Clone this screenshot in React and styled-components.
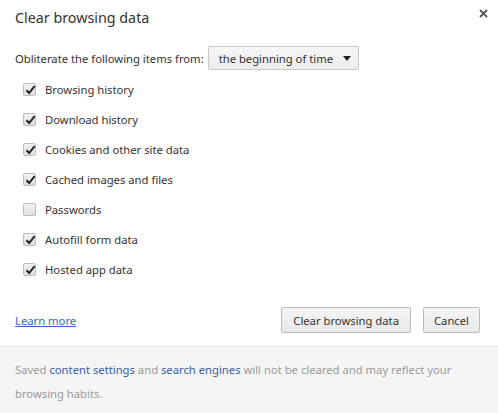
import React from "react";
import styled, { createGlobalStyle } from "styled-components";

const Global = createGlobalStyle`
  html, body { margin: 0; padding: 0; background: #fff; }
  body { font-family: "Noto Sans", "Open Sans", sans-serif; }
`;

const Dialog = styled.div`
  width: 498px;
  height: 413px;
  background: #fff;
  display: flex;
  flex-direction: column;
  position: relative;
  color: #333;
  font-size: 11.25px;
`;

const Header = styled.div`
  padding: 7px 15px 0;
  height: 38px;
  box-sizing: border-box;
`;

const Title = styled.h1`
  margin: 0;
  font-size: 14.3px;
  font-weight: 400;
  line-height: 22px;
  color: #333;
`;

const Close = styled.button`
  position: absolute;
  top: 6px;
  right: 8px;
  width: 14px;
  height: 14px;
  border: 0;
  padding: 0;
  background: none;
  display: flex;
  align-items: center;
  justify-content: center;
`;

const Body = styled.div`
  padding: 0 15px;
  flex: 1;
  display: flex;
  flex-direction: column;
`;

const FromRow = styled.div`
  display: flex;
  align-items: center;
  gap: 4px;
  height: 24px;
  margin-top: 8px;
`;

const Select = styled.div`
  display: flex;
  align-items: center;
  justify-content: space-between;
  width: 151px;
  height: 24px;
  box-sizing: border-box;
  padding: 0 7px 0 10px;
  border: 1px solid #c8c8c8;
  border-radius: 2px;
  background: linear-gradient(#f6f6f6, #ececec);
  color: #333;
`;

const Arrow = styled.span`
  width: 0;
  height: 0;
  border-left: 4.5px solid transparent;
  border-right: 4.5px solid transparent;
  border-top: 5px solid #222;
`;

const List = styled.div`
  display: flex;
  flex-direction: column;
  margin-top: 4px;
`;

const Row = styled.label`
  display: flex;
  align-items: center;
  height: 30px;
  padding-left: 8px;
  gap: 9px;
`;

const Box = styled.span`
  width: 13px;
  height: 13px;
  box-sizing: border-box;
  border: 1px solid #bdbdbd;
  border-radius: 2px;
  background: linear-gradient(#f1f1f1, #dedede);
  position: relative;
  display: flex;
  align-items: center;
  justify-content: center;
`;

const Actions = styled.div`
  display: flex;
  align-items: center;
  margin-top: 23px;
  height: 26px;
  padding-right: 3px;
`;

const LearnMore = styled.a`
  color: #3367d6;
  text-decoration: underline;
  margin-right: auto;
`;

const Button = styled.button`
  font-family: inherit;
  font-size: 11.25px;
  color: #333;
  height: 26px;
  padding: 0 ${(p) => p.$pad || 12}px;
  border: 1px solid #bcbcbc;
  border-radius: 2px;
  background: linear-gradient(#f5f5f5, #e9e9e9);
  margin-left: ${(p) => p.$gap || 0}px;
`;

const Footer = styled.div`
  background: #f5f5f5;
  border-top: 1px solid #e4e4e4;
  padding: 11px 15px 0;
  height: 67px;
  box-sizing: border-box;
  color: #999;
  line-height: 24px;
`;

const FLink = styled.a`
  color: #3a5ca8;
  text-decoration: none;
`;

const items = [
  ["Browsing history", true],
  ["Download history", true],
  ["Cookies and other site data", true],
  ["Cached images and files", true],
  ["Passwords", false],
  ["Autofill form data", true],
  ["Hosted app data", true],
];

function Check({ on }) {
  return (
    <Box>
      {on && (
        <svg width="11" height="10" viewBox="0 0 11 10" style={{ position: "absolute", left: 1, top: 1 }}>
          <path d="M1.5 5.2 L4.2 8 L9.6 1.2" fill="none" stroke="#222" strokeWidth="2" />
        </svg>
      )}
    </Box>
  );
}

export default function App() {
  return (
    <>
      <Global />
      <Dialog>
        <Header>
          <Title>Clear browsing data</Title>
        </Header>
        <Close aria-label="close">
          <svg width="9" height="9" viewBox="0 0 9 9">
            <path d="M1 1 L8 8 M8 1 L1 8" stroke="#555" strokeWidth="1.8" />
          </svg>
        </Close>
        <Body>
          <FromRow>
            <span>Obliterate the following items from:</span>
            <Select>
              <span>the beginning of time</span>
              <Arrow />
            </Select>
          </FromRow>
          <List>
            {items.map(([t, on]) => (
              <Row key={t}>
                <Check on={on} />
                <span>{t}</span>
              </Row>
            ))}
          </List>
          <Actions>
            <LearnMore href="#">Learn more</LearnMore>
            <Button $pad={11}>Clear browsing data</Button>
            <Button $pad={10} $gap={12}>Cancel</Button>
          </Actions>
        </Body>
        <Footer>
          Saved <FLink href="#">content settings</FLink> and <FLink href="#">search engines</FLink> will not be cleared and may reflect your browsing habits.
        </Footer>
      </Dialog>
    </>
  );
}
